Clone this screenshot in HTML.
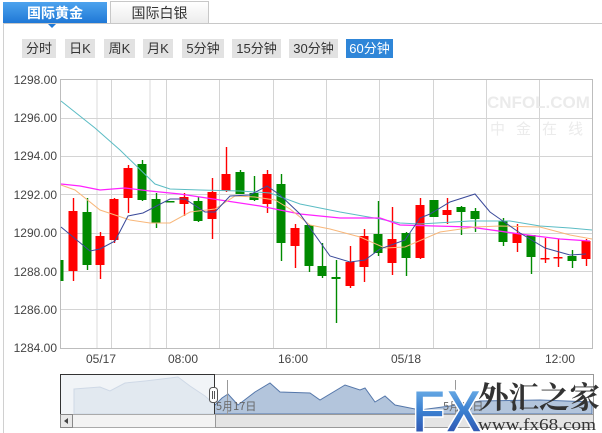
<!DOCTYPE html>
<html><head><meta charset="utf-8"><style>
body{margin:0;width:602px;height:433px;overflow:hidden;background:#fff;font-family:"Liberation Sans","Noto Sans CJK SC",sans-serif;position:relative}
.tab{position:absolute;top:2px;height:21px;font-size:14px;text-align:center;line-height:22px}
.t1{left:3px;width:104px;background:linear-gradient(#4da3ee,#1f78d6);color:#fff;font-weight:bold}
.t2{left:110px;width:97px;background:linear-gradient(#fff,#ececec);border:1px solid #c8c8c8;border-bottom:none;color:#333;top:1px}
.btn{position:absolute;top:39px;height:19px;background:#e2e2e2;color:#333;font-size:13px;line-height:19px;text-align:center}
.on{background:#2f86d8;color:#fff}
</style></head><body>
<div class="tab t1">国际黄金</div>
<div style="position:absolute;left:47px;top:23px;width:0;height:0;border-left:5px solid transparent;border-right:5px solid transparent;border-top:5px solid #1f78d6"></div>
<div class="tab t2">国际白银</div>
<div style="position:absolute;left:3px;top:23px;width:599px;height:1px;background:#c8c8c8"></div>
<div style="position:absolute;left:3px;top:23px;width:1px;height:410px;background:#d0d0d0"></div>
<div class="btn" style="left:22px;width:34px">分时</div>
<div class="btn" style="left:65px;width:30px">日K</div>
<div class="btn" style="left:104px;width:31px">周K</div>
<div class="btn" style="left:143px;width:30px">月K</div>
<div class="btn" style="left:182px;width:42px">5分钟</div>
<div class="btn" style="left:232px;width:49px">15分钟</div>
<div class="btn" style="left:289px;width:49px">30分钟</div>
<div class="btn on" style="left:346px;width:47px">60分钟</div>
<svg width="602" height="433" style="position:absolute;left:0;top:0" font-family="Liberation Sans, sans-serif">
<g stroke="#ededed" stroke-width="2"><line x1="97" y1="79" x2="97" y2="348"/><line x1="150" y1="79" x2="150" y2="348"/></g>
<g stroke="#d4d4d4" stroke-width="1">
<line x1="60" y1="118.5" x2="593" y2="118.5"/><line x1="60" y1="156.5" x2="593" y2="156.5"/><line x1="60" y1="194.5" x2="593" y2="194.5"/><line x1="60" y1="233.5" x2="593" y2="233.5"/><line x1="60" y1="271.5" x2="593" y2="271.5"/><line x1="60" y1="309.5" x2="593" y2="309.5"/>
<line x1="111.5" y1="79" x2="111.5" y2="348"/><line x1="166.5" y1="79" x2="166.5" y2="348"/><line x1="219.5" y1="79" x2="219.5" y2="348"/><line x1="273.5" y1="79" x2="273.5" y2="348"/><line x1="326.5" y1="79" x2="326.5" y2="348"/><line x1="379.5" y1="79" x2="379.5" y2="348"/><line x1="433.5" y1="79" x2="433.5" y2="348"/><line x1="486.5" y1="79" x2="486.5" y2="348"/><line x1="539.5" y1="79" x2="539.5" y2="348"/>
</g>
<rect x="60.5" y="79.5" width="532" height="269" fill="none" stroke="#bdbdbd"/>
<text x="487" y="108" font-size="17" font-weight="bold" fill="#ebebeb">CNFOL.COM</text>
<text x="490" y="134" font-size="15" fill="#ebebeb" font-family="Noto Sans CJK SC,sans-serif" letter-spacing="11">中金在线</text>
<g font-size="12" fill="#444" text-anchor="end">
<text x="57" y="84">1298.00</text><text x="57" y="122">1296.00</text><text x="57" y="160">1294.00</text><text x="57" y="199">1292.00</text><text x="57" y="237">1290.00</text><text x="57" y="276">1288.00</text><text x="57" y="314">1286.00</text><text x="57" y="352">1284.00</text>
</g>
<g font-size="12" fill="#444" text-anchor="middle">
<text x="101" y="363">05/17</text><text x="183" y="363">08:00</text><text x="293" y="363">16:00</text><text x="406" y="363">05/18</text><text x="560" y="363">12:00</text>
</g>
<g id="c"></g>
<g fill="none" stroke-width="1">
<polyline stroke="#5bbcc4" points="61,101 95,128 120,150 155,184 170,189 200,190 240,191 270,193 300,204 340,212 380,219 400,223 420,224 470,221 510,221 540,226 570,228 592,230"/>
<polyline stroke="#ff22ff" stroke-width="1.3" points="61,184 80,186 100,190 125,188 150,191 180,194 220,200 260,206 300,214 340,218 380,218 400,225 470,227 520,234 560,239 590,241"/>
<polyline stroke="#f8b77a" points="61,185 75,190 100,210 130,220 150,223 170,223 190,212 215,209 235,196 255,197 275,200 290,209 310,225 330,229 360,237 385,248 405,247 440,232 475,227 500,226 540,227 570,235 592,239"/>
<polyline stroke="#3b4a9a" points="61,227 90,251 100,249 115,241 128,216 143,213 170,199 185,199 205,212 215,212 230,196 250,195 267,186 280,195 300,214 330,256 350,262 365,260 380,249 405,240 420,218 430,214 450,202 475,194 490,212 520,233 545,248 570,255 586,254"/>
</g>
<rect x="60.5" y="374.5" width="533" height="40" fill="#fff" stroke="#999"/>
<path d="M74,389 L100,387 L110,391 L125,383 L145,381 L170,378 L178,377 L190,386 L205,396 L215,405 L222,398 L228,394 L238,405 L255,392 L270,383 L280,392 L310,393 L320,400 L345,385 L360,390 L365,388 L375,402 L385,396 L395,405 L420,410 L450,406 L480,401 L540,400 L592,402 L592,414 L74,414Z" fill="#b3c5dc" stroke="#5577aa"/>
<rect x="61" y="375" width="154" height="39" fill="#eef1f5" fill-opacity="0.8"/>
<rect x="60.5" y="374.5" width="154" height="40" fill="none" stroke="#333"/>
<line x1="227.5" y1="380" x2="227.5" y2="414" stroke="#999"/>
<line x1="455.5" y1="380" x2="455.5" y2="414" stroke="#999"/>
<text x="216" y="410" font-size="11" fill="#666" font-family="Noto Sans CJK SC,sans-serif">5月17日</text>
<text x="443" y="410" font-size="11" fill="#666" font-family="Noto Sans CJK SC,sans-serif">5月18日</text>
<rect x="209.5" y="387.5" width="8" height="15" rx="3" fill="#fff" stroke="#555"/>
<line x1="212.5" y1="391" x2="212.5" y2="399" stroke="#555"/><line x1="214.5" y1="391" x2="214.5" y2="399" stroke="#555"/>
<rect x="60.5" y="414.5" width="533" height="13" fill="#f3f3f3" stroke="#aaa"/>
<rect x="215.5" y="414.5" width="378" height="13" fill="#e4e4e4" stroke="#999"/>
<rect x="60.5" y="414.5" width="12" height="13" fill="#e8e8e8" stroke="#888"/>
<path d="M68,418 L64,421 L68,424Z" fill="#444"/>
<defs><linearGradient id="fx" x1="0" y1="0" x2="0" y2="1"><stop offset="0" stop-color="#7fc0f0"/><stop offset="0.5" stop-color="#3a7fd0"/><stop offset="1" stop-color="#2a40a0"/></linearGradient></defs>
<text x="412" y="432" font-size="60" font-weight="bold" fill="url(#fx)" stroke="#fff" stroke-width="1.5" font-family="Liberation Sans,sans-serif" textLength="70" lengthAdjust="spacingAndGlyphs">FX</text>
<text x="478" y="408" font-size="30" font-weight="bold" fill="#333" font-family="Noto Serif CJK SC,serif" textLength="122" lengthAdjust="spacingAndGlyphs">外汇之家</text>
<text x="478" y="430" font-size="17" fill="#333" font-family="Liberation Serif,serif" textLength="118" lengthAdjust="spacingAndGlyphs">www.fx68.com</text>
</svg>
<script>
var d=[[62,'g',260,281,260,281],[73,'r',211,271,198,281],[87,'g',212,265,198,270],[100,'r',236,265,232,279],[114,'r',199,240,198,243],[128,'r',168,198,165,213],[142,'g',164,200,160,201],[156,'g',199,223,193,228],[170,'g',201,202,201,202],[184,'r',197,204,193,216],[198,'g',201,221,197,222],[212,'r',192,219,178,239],[226,'r',174,191,147,192],[240,'g',172,194,170,194],[254,'g',193,200,176,201],[267,'r',174,204,170,213],[281,'g',184,243,174,261],[295,'r',228,246,224,268],[309,'g',225,266,225,272],[322,'g',266,276,243,278],[336,'g',277,279,260,323],[350,'r',262,286,246,288],[364,'r',236,267,229,282],[378,'g',234,253,201,256],[392,'r',239,263,207,275],[406,'g',233,258,232,276],[420,'r',205,258,198,259],[434,'g',200,217,200,217],[447,'r',210,215,198,224],[461,'g',207,212,206,235],[475,'g',211,219,208,232],[503,'g',221,242,218,246],[517,'r',233,243,224,252],[531,'g',235,257,235,274],[545,'r',258,259,238,263],[558,'r',257,258,239,267],[572,'g',256,261,250,268],[586,'r',241,259,239,266]];
var s='';d.forEach(function(c){var col=c[1]=='r'?'#ff0000':'#008a00';var w=9,x=c[0]-4.5;if(c[0]==62){x=60.5;w=3;}
s+='<line x1="'+(c[0]+0.5)+'" y1="'+c[4]+'" x2="'+(c[0]+0.5)+'" y2="'+c[5]+'" stroke="'+col+'" stroke-width="1.4"/>';
s+='<rect x="'+x+'" y="'+c[2]+'" width="'+w+'" height="'+Math.max(1.5,c[3]-c[2])+'" fill="'+col+'"/>';});
document.getElementById('c').innerHTML=s;
</script>
</body></html>
